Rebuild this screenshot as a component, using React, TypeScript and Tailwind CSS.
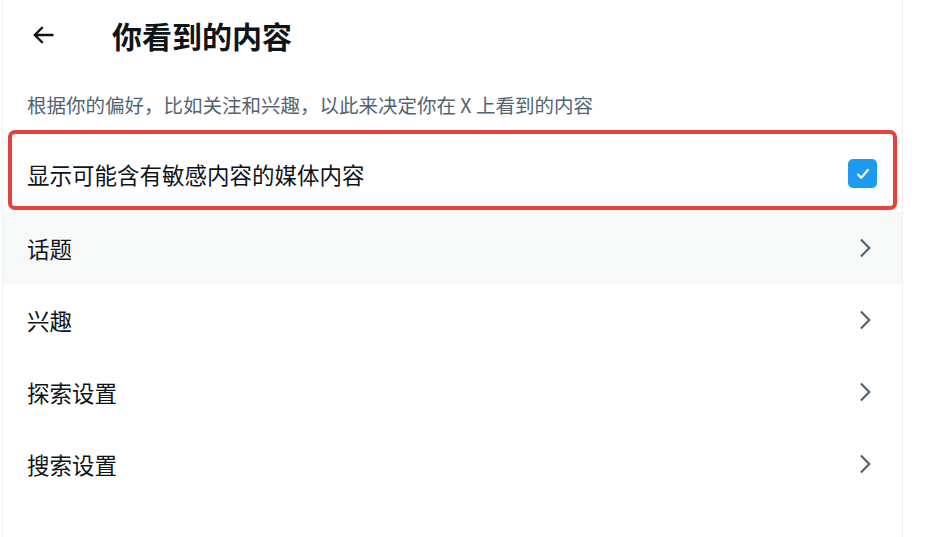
const rows: string[] = ["话题", "兴趣", "探索设置", "搜索设置"];

function Chevron() {
    return (
        <svg viewBox="0 0 24 24" className="w-[26px] h-[26px] text-[#536471]" fill="currentColor">
            <path d="M14.586 12L7.543 4.96l1.414-1.42L17.414 12l-8.457 8.46-1.414-1.42L14.586 12z" />
        </svg>
    );
}

export default function App() {
    return (
        <div
            className="w-[930px] h-[537px] bg-white pl-[2px] overflow-hidden"
            style={{ fontFamily: '"Noto Sans CJK SC", "Noto Sans", sans-serif' }}>
            <div className="w-[901px] h-full border-x border-[#eff3f4] text-[#0f1419]">
                {/* Header */}
                <div className="h-[70px] flex items-center pl-[26px]">
                    <svg viewBox="0 0 24 24" className="w-[28px] h-[28px]" fill="currentColor">
                        <path d="M7.414 13l5.043 5.04-1.414 1.42L3.586 12l7.457-7.46 1.414 1.42L7.414 11H21v2H7.414z" />
                    </svg>
                    <h1 className="ml-[55px] text-[30px] leading-[36px] font-bold">你看到的内容</h1>
                </div>

                {/* Description */}
                <p className="px-[24px] pt-[24px] pb-[15px] text-[19.5px] leading-[21px] text-[#536471]">
                    根据你的偏好，比如关注和兴趣，以此来决定你在 X 上看到的内容
                </p>

                {/* Sensitive media row */}
                <div className="mx-[5px] h-[80px] border-4 border-[#e8403f] rounded-[7px] flex items-center justify-between pl-[15px] pr-[16px] pt-[7px]">
                    <span className="text-[22.5px] leading-[28px]">显示可能含有敏感内容的媒体内容</span>
                    <span className="w-[29px] h-[29px] rounded-[5px] bg-[#1d9bf0] flex items-center justify-center">
                        <svg viewBox="0 0 24 24" className="w-[20px] h-[20px]" fill="none" stroke="white" strokeWidth="2.6" strokeLinecap="round" strokeLinejoin="round">
                            <path d="M6 12.5l3.8 4L18 7" />
                        </svg>
                    </span>
                </div>

                {/* Links */}
                <div className="mt-[2px]">
                    {rows.map((label, i) => (
                        <div
                            key={label}
                            className={`h-[72px] flex items-center justify-between pl-[24px] pr-[24px] ${i === 0 ? "bg-[#f7f9f9]" : ""}`}>
                            <span className="text-[22.5px] leading-[28px]">{label}</span>
                            <Chevron />
                        </div>
                    ))}
                </div>
            </div>
        </div>
    );
}
